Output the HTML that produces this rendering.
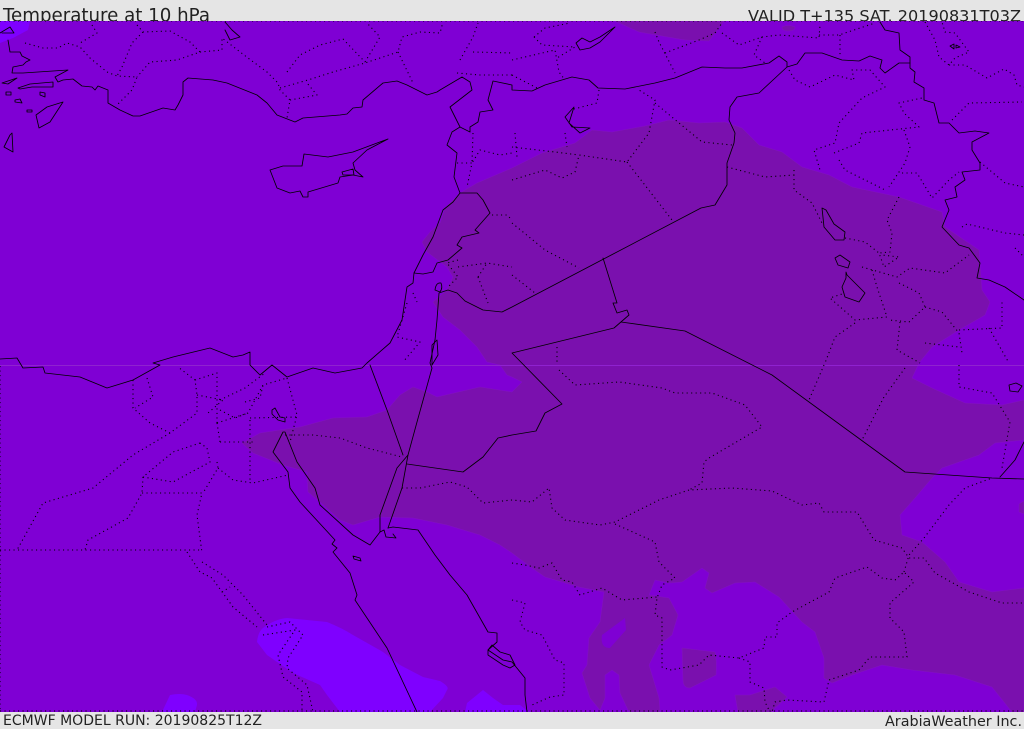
<!DOCTYPE html>
<html><head><meta charset="utf-8"><title>Temperature at 10 hPa</title>
<style>
html,body{margin:0;padding:0;background:#e5e5e5;width:1024px;height:729px;overflow:hidden}
svg{display:block}
text{font-family:"DejaVu Sans","Liberation Sans",sans-serif;fill:#222}
.s{fill:none;stroke:#000;stroke-width:.85;stroke-linejoin:round;stroke-linecap:round}
.d{fill:none;stroke:#000;stroke-width:1.1;stroke-dasharray:1.1 3.4;stroke-linejoin:round}
</style></head><body>
<svg width="1024" height="729" viewBox="0 0 1024 729" xmlns="http://www.w3.org/2000/svg">
<rect width="1024" height="729" fill="#e5e5e5"/>
<text x="3" y="21.5" font-size="18.2" textLength="207" lengthAdjust="spacingAndGlyphs">Temperature at 10 hPa</text>
<text x="748" y="21.5" font-size="16.1" textLength="273" lengthAdjust="spacingAndGlyphs">VALID T+135 SAT. 20190831T03Z</text>
<text x="3" y="725" font-size="14" textLength="259" lengthAdjust="spacingAndGlyphs">ECMWF MODEL RUN: 20190825T12Z</text>
<text x="885" y="726" font-size="14.3" textLength="137" lengthAdjust="spacingAndGlyphs">ArabiaWeather Inc.</text>
<svg x="0" y="21" width="1024" height="691" viewBox="0 21 1024 691">
<rect x="0" y="21" width="1024" height="691" fill="#7f00d4"/>
<!-- light regions -->
<g fill="#7f00ff">
<path d="M0 21H30L28 30L13 38L0 43Z"/>
<path d="M257 642Q258 632 263 628Q275 619 287 618L327 622Q342 628 353 635L383 652L400 665L423 677L440 681Q450 687 447 690L443 698L430 712H340L327 695L320 685L293 673L267 655Z"/>
<path d="M162 712L170 695Q180 693 187 695Q198 699 197 705L195 712Z"/>
<path d="M465 712L467 703L483 690L493 698L503 705H520L529 712Z"/>
</g>
<!-- dark region -->
<g fill="#7a10ae" stroke="#8411c4" stroke-width=".5">
<path d="M512 168L542 153L575 143L592 130L612 132L645 126L669 120L699 123L725 122L742 128L759 145L782 152L802 167L829 175L852 187L899 197L942 212L945 227L979 250L982 290L990 302L985 315L959 330L932 347L919 363L912 378L932 388L965 403L1002 405L1024 400V440L995 443L979 455L942 468L932 478L915 498L900 515L902 535L922 542L945 562L959 582L992 592L1024 588V712H1012L992 687L955 675L912 670L882 665L852 675L832 683L824 678V658L815 632L802 622L779 597L755 582L735 583L712 593L705 588L709 573L702 568L682 582L669 583L655 580L649 595L669 598L678 615L672 635L659 645L649 665L659 698L660 712H629L620 693L619 675L612 670L605 675V698L600 710L590 698L582 673L587 665L589 638L600 622L604 592L579 587L545 577L532 568L512 553L500 545L480 535L447 525L413 518L380 517L353 525L340 520L320 502L308 492L307 472L283 465L253 453L242 443L260 433L300 427L333 418L367 417L387 410L400 395L413 387L427 392L437 397L467 390L480 387L512 392L522 382L512 377L507 375L500 365L487 362L477 347L460 330L443 317L433 302L447 290L453 277L447 267L427 252L422 242L430 232L440 223L445 208L460 193L477 183Z"/>
<path d="M615 21L639 32L685 40L709 41L724 21Z"/>
<path d="M782 27Q788 24 795 27Q795 31 788 31Q782 31 782 27Z"/>
<path d="M682 648L715 652Q717 660 716 675L690 688Q683 688 683 680Z"/>
<path d="M735 695H750L775 687L787 697L775 708L772 712H738Z"/>
<path d="M1024 501L1019 504V512L1024 514Z"/>
</g>
<path d="M602 635L625 618L626 630L610 648Q600 648 602 635Z" fill="#7f00d4"/>
<rect x="0" y="365" width="1024" height="1" fill="#8f22cf"/>
<!-- dotted borders -->
<g class="d">
<path d="M0 21H1024M0 711H1024M0 366V711"/>
<path d="M25 43L43 48L58 48L67 43L80 47L90 58L107 72L117 76L137 77L132 90L117 105M92 25L97 33L80 43M137 25L143 32L170 31L190 42L200 52L177 60L150 62L137 77M143 32L132 43L122 67L117 76M200 52L222 50L222 38L248 58L267 72L278 83L280 90L290 100L287 118M280 88L308 80L333 72L365 63L398 52L402 37L420 32L440 33L443 22M287 72L300 55L320 45L343 39L365 62M365 62L380 37L367 23M398 52L413 83M290 100L317 95L307 83M457 73L480 75L512 75M460 60L473 37L478 23M473 52L512 53M473 133L472 163L480 150L500 155L512 153M457 163H472L467 187M413 293L417 302M407 303L397 337L420 342L403 362M458 260L447 263L458 277L448 287M458 267L487 263L512 267M478 277L487 263M478 277L488 303M492 215L507 215L512 220"/>
<path d="M512 60L555 50L559 72L565 80M534 37L545 28L570 23M534 37L542 45L575 47L557 58M512 75L537 88M655 32L659 42L675 73M665 53L699 40L715 33L722 23M722 33L739 45L762 37L779 35L819 38L820 25M819 35L839 35L875 23M840 35L840 57M762 37L754 55L765 63"/>
<path d="M789 70L795 80L810 87L835 75L854 80L852 70L870 70L885 87L862 98L839 123L835 143L814 150L820 170M834 153L859 143L862 133L919 127L904 113L899 103L922 98M904 130L910 147L905 163L889 187M902 173L917 173L932 198L949 180L959 172M839 160L845 170L885 190M952 120L969 103L1022 102M925 22L935 40L939 57L949 65L955 58L969 52L955 33L945 32L942 22M949 65L965 65L987 78L1004 69L1014 75L1017 85L1024 87M980 162L1005 183L1024 187M962 227L967 224L1005 233L1024 235M1015 248L1024 257"/>
<path d="M899 197L887 220L892 233L890 252L879 253M845 238L865 242L879 253L884 267L899 257L882 255M862 267L897 277L910 268L945 273L969 255M872 270L877 287L887 317L855 320L830 298L845 293M899 283L919 293L925 307L909 322L889 320M925 307L942 312L959 333L962 353M900 322L897 350L920 363M925 343L959 347M959 330L1002 328L1002 300M989 328L1009 363M855 323L835 337L825 363M794 170V190L812 203L822 223M727 167L765 177L794 175"/>
<path d="M512 180L545 170L562 178L575 172L579 155L627 162L649 133L655 100L639 90M655 103L702 142L732 145M627 162L672 220M512 223L545 250L579 268M512 275L535 293M512 147L555 152L579 155M515 133L517 157M565 133L567 147M599 90L597 103L574 109M557 347V365"/>
<path d="M0 550H200M133 380V408L150 423L170 433L197 413V395L195 380L178 367M147 378L153 397L135 408M170 433L133 455L93 488L43 503L17 550M200 443L173 452L143 477L142 493L128 518L88 540L85 550M143 477L173 482L210 462L207 448L200 443M142 493H202L197 515L202 553M217 462L218 468L203 493M218 468L233 480L253 483L288 475M250 420V483M220 442H253M217 423L220 442M217 423L248 413L263 385L287 378M220 410L235 418L248 413M197 395L223 400L208 413M195 380L217 373V423M220 400L245 388L265 373M245 402L260 398L263 385M287 378L297 415L290 442M250 418L297 417"/>
<path d="M285 435L313 435L340 438L367 448L402 457M402 488L420 488L450 482L467 487L483 503L512 500L532 502L549 488L552 508L565 520L600 525L615 522L659 500L689 490L732 488L772 491L802 505L819 503L824 512L857 512L874 540L902 548L909 558L924 558L935 573L969 592L1002 603H1024"/>
<path d="M615 524L655 542L659 562L675 578L662 585L657 598L655 615L662 618V667L670 670L699 665L709 655L739 658L764 648L765 637H777V623L792 612L829 592L835 578L867 567L882 578L895 580L904 572L914 582L890 603V618L904 632L907 657H870L859 670L829 680L824 702L787 700L775 702L772 712M739 658L750 662V682L764 688L765 702L770 712M904 572L909 555L924 538L949 505L965 488L992 478"/>
<path d="M512 563L525 565L539 568L552 563L562 580L572 582L580 595L602 588L622 600L657 597M512 600L525 603L520 622L525 630L542 635L555 660L564 663V695L550 697L532 705M559 370L575 385L619 382L662 388L675 393H712L745 405L762 427L709 458L704 462L702 483L689 490M824 365L809 400M905 368L884 397L862 440M959 365V387L992 393L1010 422L1002 468"/>
<path d="M187 552L200 572L212 578L233 607L257 627M202 562L223 575L243 595L267 625M222 592L230 587M267 627L290 622L303 635L288 658L287 668L307 685L313 712M263 635L295 630L278 655L283 677L302 692V712"/>
</g>
<!-- solid coast and borders -->
<g class="s">
<path d="M8 40L10 52L20 52L22 56L30 60L26 62L23 65L13 67L12 73L23 73L68 70L55 77L58 82L63 80L73 79L82 86L92 87L95 90L98 86L108 90V103L120 110L133 116H140L163 108L175 110L178 105L183 95V82L188 78L213 80L227 83L257 95L267 103L277 115L295 122L303 118L340 115L347 114L353 108L362 107L363 100L383 83L397 81L407 85L427 95L437 92L440 90L462 77L470 82L472 90L450 107L460 127L452 132L447 145L457 153L454 177L460 193L453 202L443 210L433 237L423 255L414 273L413 283L407 287L402 320L390 343L367 363L362 368L335 373L313 368L287 377L272 365L260 375L250 365L250 352L243 355L233 357L210 348L173 357L153 363L160 365L133 380L107 388L80 377L45 373L43 367L23 368L17 358L0 359"/>
<path d="M460 127L470 132V127L478 122L480 112L493 110L488 100L493 81L512 85V90L532 91L545 85L572 77L589 80L598 88L625 89L655 83L675 78L702 67L725 68H742L769 63L779 56L787 62V67L797 64L805 53H812L822 53L842 60L859 61L870 56L882 60L880 68L885 73L899 63H910"/>
<path d="M880 22L885 30L899 33L900 50L910 57V68L915 72L914 82L924 88V100L934 103L939 123L949 123L959 133L975 131L989 133L972 142V150L980 163V170L962 172L965 180L955 187L957 197L945 200L949 210L942 227L959 245L969 248L980 263L977 278L989 280L1005 287L1024 300"/>
<path d="M787 67L759 93L737 97L730 107L729 120L735 133L734 143L727 163V185L715 205L701 208L512 307L502 312L483 310L465 301L457 293L448 290L439 293L437 320L435 340L430 363L432 368L417 422L408 455L402 488L388 528"/>
<path d="M408 455L397 468L380 515V532L370 545L353 535L320 505L315 488L297 462L285 432L283 432L273 452L288 472L290 488L300 502L335 540L332 544L337 548L333 552L350 573L357 595L355 600L387 648L417 712"/>
<path d="M388 528L393 527L418 530L435 555L450 575L467 595L488 632L497 633V642L488 650L503 660L512 662L525 678V695L527 712"/>
<path d="M488 650L492 645L500 652L510 655L515 665L510 668L503 665L488 655Z"/>
<path d="M370 365L387 410L403 455M407 464L463 472L483 457L498 438L512 435L536 431L545 413L562 404L512 353L614 328L629 315L627 310L617 313L613 303H617L603 258M621 322L685 331L772 375L905 472L992 478L1024 479M1000 477L1015 460L1024 442"/>
<path d="M460 193H477L483 200L490 213L475 230L479 233L462 237L457 245L462 248L448 260L437 263L433 272L423 274L414 273"/>
<path d="M270 170L283 166H302L304 154L328 157L353 152L388 139L367 150L353 163L355 170L363 177L353 175L340 177L338 183L308 192V197H303L300 191L290 193L277 188Z"/>
<path d="M342 172L353 169L354 175L343 175Z"/>
<path d="M63 102L47 107L36 115L39 128L50 122Z"/>
<path d="M10 135L12 133L13 152L4 147Z"/>
<path d="M2 83L17 78L8 84ZM18 88L30 84L53 82V87L32 87L20 89ZM40 92L45 93V97L40 95ZM15 100L20 99L22 103L15 102ZM6 92H11V95H6ZM27 110H32V112H27Z"/>
<path d="M0 33L10 27L14 33H2M225 22L232 30L240 37L230 40L225 30"/>
<path d="M435 290Q436 282 441 283Q443 288 440 292ZM432 345L437 340L438 355L432 365Z"/>
<path d="M272 410L275 408L280 417L285 418V422L278 420L272 414Z"/>
<path d="M822 208L826 210L834 224L845 232L844 240L835 240L824 227Z"/>
<path d="M835 258L840 255L850 262L848 268L838 265Z"/>
<path d="M846 272L847 275L855 283L865 293L859 302L845 297L842 287L846 278Z"/>
<path d="M576 43L582 38L590 42L600 37L615 27L610 32L600 42L590 48L580 50Z"/>
<path d="M574 107L565 117L572 127L590 128L580 133L569 123Z"/>
<path d="M380 532L384 530L386 537L396 538L393 534"/>
<path d="M353 556L360 558L361 561L354 559Z"/>
<path d="M1009 385L1016 383L1022 386L1018 392L1010 391Z"/>
<path d="M950 46L954 44V49ZM956 45L960 47L956 48Z"/>
</g>
</svg>
</svg>
</body></html>
